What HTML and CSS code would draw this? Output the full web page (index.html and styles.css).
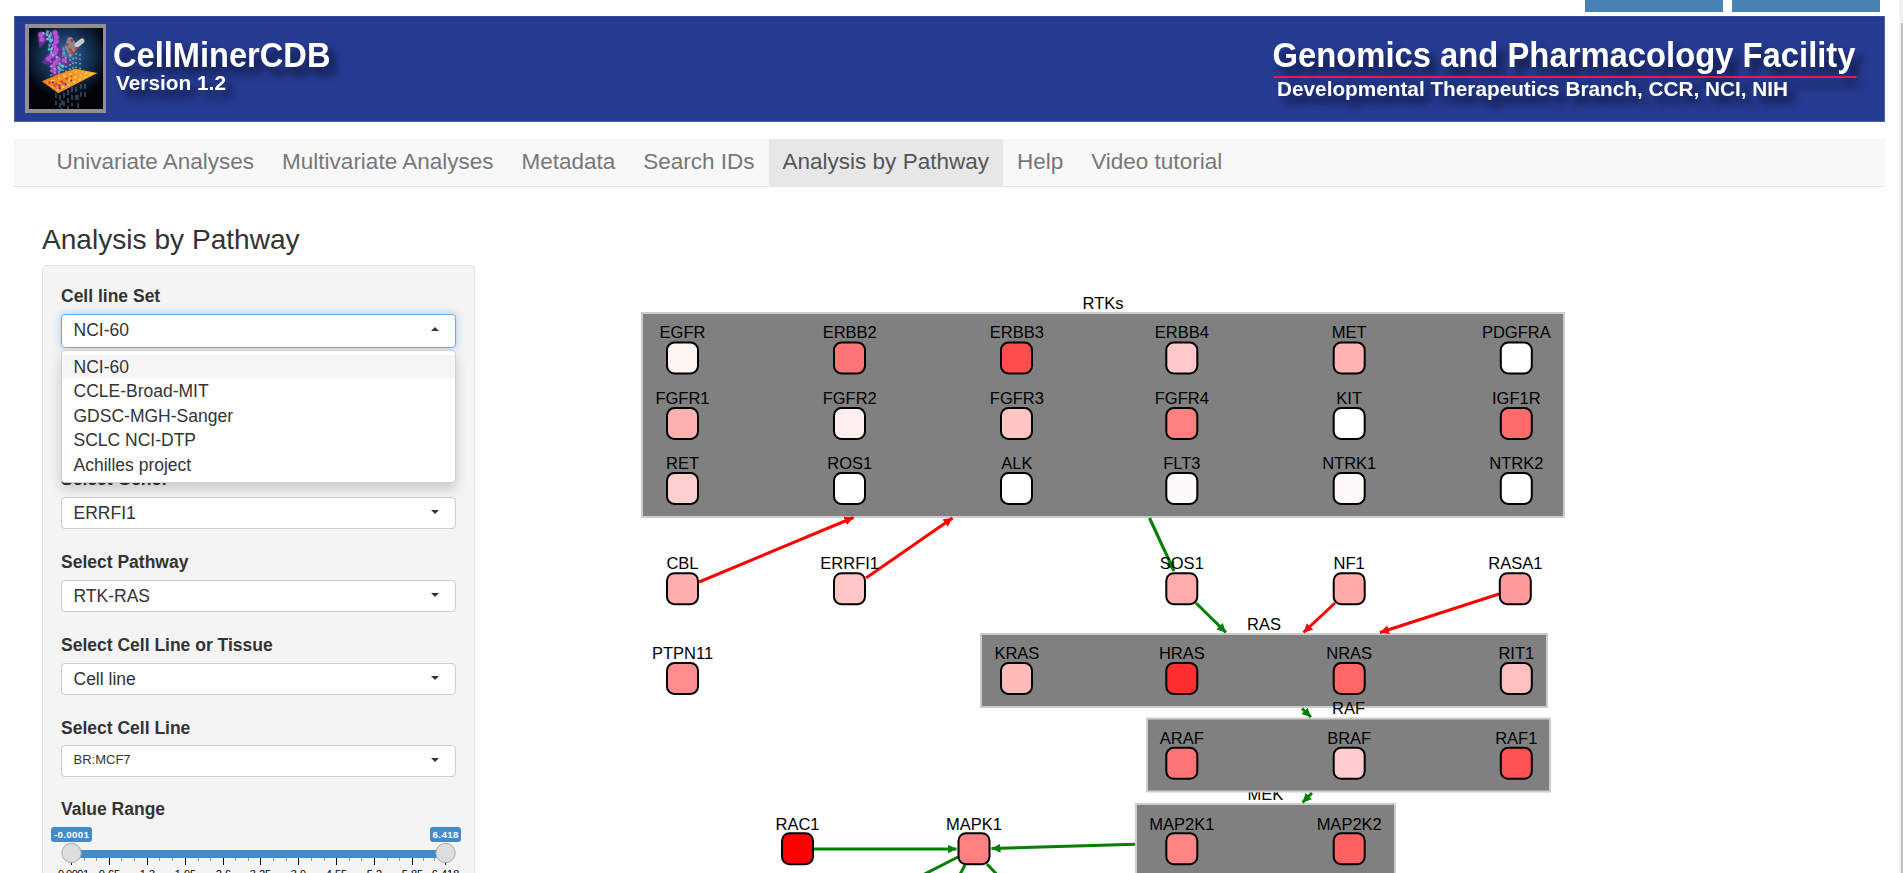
FILE: index.html
```
<!DOCTYPE html>
<html lang="en">
<head>
<meta charset="utf-8">
<title>CellMinerCDB</title>
<link rel="stylesheet" href="styles.css">
</head>
<body>
<div class="page">
  <div class="top-links"><span class="top-link feedback"></span><span class="top-link contact"></span></div>

  <header class="banner">
    <svg class="banner-art" viewBox="14 16 1871 106" width="1871" height="106">
      <defs>
        <radialGradient id="glow" cx="50%" cy="38%" r="60%">
          <stop offset="0" stop-color="#3a78a8"/><stop offset=".45" stop-color="#173a63"/><stop offset="1" stop-color="#02040a"/>
        </radialGradient>
        <linearGradient id="plate" x1="0" x2="1"><stop offset="0" stop-color="#f07a1c"/><stop offset="1" stop-color="#f6b02c"/></linearGradient>
      </defs>
      <rect x="25" y="24" width="81" height="89" fill="#918f92"/>
      <svg x="29" y="28" width="74" height="81" viewBox="0 0 74 81">
        <rect width="74" height="81" fill="#02040a"/>
        <rect width="74" height="72" fill="url(#glow)"/>
        <g fill="none" stroke-linecap="round">
          <path d="M16 6L25 10L23 24M31 20L33 34L25 46" stroke="#5d9fc4" stroke-width="9" stroke-dasharray="3 1" stroke-linecap="butt"/>
          <path d="M12 7L13 13L17 9M26 5L28 12L25 18L28 23L20 30L18 33L24 35M30 22L29 31L24 38L26 45M35 32L38 34" stroke="#65308f" stroke-width="7"/>
          <path d="M12 7L13 13M26 5L28 12L25 18L28 23L20 30L18 33M29 31L24 38L26 45M35 32L38 34" stroke="#b552d2" stroke-width="5" stroke-dasharray="0 4.500"/>
          <path d="M14 5L21 8L18 11L25 13M23 20L22 26L28 29" stroke="#75bddb" stroke-width="2" stroke-dasharray="1 3"/>
          <path d="M41 12L39 19L42 24L46 18L42 14" stroke="#8b8591" stroke-width="6"/>
          <path d="M48 17L53 13" stroke="#c9cccc" stroke-width="5"/>
          <path d="M38 16L42 23M43 25L48 20M43 12L42 16" stroke="#b9392e" stroke-width="2.500" stroke-dasharray="1 5"/>
        </g>
        <g fill="none" stroke="#c5ddec" stroke-dasharray="1.500 3">
          <path d="M22 33V53M26 40V53M30 34V51M34 37V51M37 29V48M41 27V47M44 30V46M47 25V45M51 26V44"/>
        </g>
        <path d="M12.700 53.300L30 46L46 40.700L68.300 45L29.300 65.300Z" fill="url(#plate)"/>
        <path d="M18 55L52 42M23 59L60 44M28 62L65 45M22 52L35 61M34 47L47 55" fill="none" stroke="#ffd568" stroke-width="1.500" stroke-dasharray="2 4"/>
        <path d="M19 54L30 60L36 54M26 57L43 48" fill="none" stroke="#e24b23" stroke-width="2.500" stroke-dasharray="3 3"/>
        <path d="M23 54L34 59M30 61L43 52" fill="none" stroke="#4a3bb5" stroke-width="2" stroke-dasharray="2 5"/>
        <g fill="none" stroke="#58748c" stroke-dasharray="5 3"><path d="M27 65V77M31 67V81M35 65V79M39 62V81M43 59V78M47 59V75M52 56V70M56 56V71M33 72V81M49 67V81"/></g>
      </svg>
      <g class="banner-text">
        <text x="113" y="67.300" font-size="35" textLength="217.500" lengthAdjust="spacingAndGlyphs">CellMinerCDB</text>
        <text x="116" y="90.300" font-size="20" textLength="110" lengthAdjust="spacingAndGlyphs">Version 1.2</text>
        <text x="1272.500" y="67.300" font-size="35.500" textLength="583" lengthAdjust="spacingAndGlyphs">Genomics and Pharmacology Facility</text>
        <rect x="1273" y="76" width="583.500" height="2" fill="#ee1650"/>
        <text x="1277" y="96" font-size="21" textLength="511" lengthAdjust="spacingAndGlyphs">Developmental Therapeutics Branch, CCR, NCI, NIH</text>
      </g>
    </svg>
  </header>

  <nav class="navbar">
    <a class="tab">Univariate Analyses</a>
    <a class="tab">Multivariate Analyses</a>
    <a class="tab">Metadata</a>
    <a class="tab">Search IDs</a>
    <a class="tab active">Analysis by Pathway</a>
    <a class="tab">Help</a>
    <a class="tab">Video tutorial</a>
  </nav>

  <main class="content">
    <section class="side">
      <h3 class="title">Analysis by Pathway</h3>
      <form class="well">
        <div class="group first">
          <label class="label">Cell line Set</label>
          <div class="select open">NCI-60<i class="caret up"></i>
            <div class="menu">
              <div class="option selected">NCI-60</div>
              <div class="option">CCLE-Broad-MIT</div>
              <div class="option">GDSC-MGH-Sanger</div>
              <div class="option">SCLC NCI-DTP</div>
              <div class="option">Achilles project</div>
            </div>
          </div>
        </div>
        <div class="group"><label class="label gene">Select Gene:</label><div class="select">ERRFI1<i class="caret"></i></div></div>
        <div class="group"><label class="label">Select Pathway</label><div class="select">RTK-RAS<i class="caret"></i></div></div>
        <div class="group"><label class="label">Select Cell Line or Tissue</label><div class="select">Cell line<i class="caret"></i></div></div>
        <div class="group"><label class="label">Select Cell Line</label><div class="select small">BR:MCF7<i class="caret"></i></div></div>
        <div class="group range">
          <label class="label">Value Range</label>
          <svg class="slider" viewBox="42 825 433 60" width="433" height="60">
            <rect x="51" y="827" width="41" height="15" rx="3" fill="#428bca"/>
            <rect x="430" y="827" width="31" height="15" rx="3" fill="#428bca"/>
            <g class="badge-text"><text x="71.500" y="838.300" textLength="35">-0.0001</text><text x="445.500" y="838.300" textLength="26">6.418</text></g>
            <rect x="71" y="850" width="375" height="8" fill="#428bca"/>
            <path class="minor" d="M84.500 858v3M96.500 858v3M121.500 858v3M134.500 858v3M159.500 858v3M172.500 858v3M198.500 858v3M210.500 858v3M235.500 858v3M248.500 858v3M273.500 858v3M286.500 858v3M311.500 858v3M324.500 858v3M349.500 858v3M361.500 858v3M387.500 858v3M399.500 858v3M423.500 858v3M434.500 858v3"/>
            <path class="major" d="M71.500 858v7M109.500 858v7M147.500 858v7M185.500 858v7M223.500 858v7M260.500 858v7M298.500 858v7M336.500 858v7M374.500 858v7M412.500 858v7M445.500 858v7"/>
            <g class="ticks"><text x="73.500" y="878" textLength="31">0.0001</text><text x="109.500" y="878">0.65</text><text x="147.500" y="878">1.3</text><text x="185.500" y="878">1.95</text><text x="223.500" y="878">2.6</text><text x="260.500" y="878">3.25</text><text x="298.500" y="878">3.9</text><text x="336.500" y="878">4.55</text><text x="374.500" y="878">5.2</text><text x="412.500" y="878">5.85</text><text x="445.500" y="878">6.418</text></g>
            <circle class="handle" cx="71.500" cy="853" r="9.700"/><circle class="handle" cx="445.500" cy="853" r="9.700"/>
          </svg>
        </div>
      </form>
    </section>

    <svg class="graph" viewBox="475 187 1410 686" width="1410" height="686">
      <defs>
        <marker id="red" markerUnits="userSpaceOnUse" markerWidth="10" markerHeight="10" refX="9" refY="4.500" orient="auto"><path d="M0 0L9 4.500L0 9Z" fill="#f00"/></marker>
        <marker id="green" markerUnits="userSpaceOnUse" markerWidth="10" markerHeight="10" refX="9" refY="4.500" orient="auto"><path d="M0 0L9 4.500L0 9Z" fill="#008000"/></marker>
      </defs>
      <g class="cluster">
        <rect x="642" y="313" width="922" height="204"/>
        <text x="1103" y="309.300">RTKs</text>
        <rect x="981" y="634" width="566" height="73"/>
        <text x="1264" y="629.800">RAS</text>
        <text x="1265.500" y="800.300">MEK</text>
        <rect x="1147" y="718.500" width="403" height="73"/>
        <text x="1348.500" y="714.300">RAF</text>
        <rect x="1136" y="804" width="259" height="80"/>
      </g>
      <g class="edge inhibit">
        <path d="M699 582L853.500 517.500"/><path d="M866 578L952.500 518"/>
        <path d="M1335 603L1303.500 632.500"/><path d="M1499 594L1380 632.500"/>
      </g>
      <g class="edge activate">
        <path d="M1149.500 518L1174 571"/><path d="M1196 603L1226 632.500"/>
        <path d="M1302 708.500L1311 717"/><path d="M1312 793L1302.500 802.500"/>
        <path d="M814 849H956.500"/><path d="M1135 844.300L991.500 848.500"/>
      </g>
      <path class="tail" d="M958 857L915 879M965 865L957 880M987 864L1003 881"/>
      <g class="nodes">
        <g fill="#fff5f3"><rect x="667" y="342.500" width="31" height="31" rx="7.500"/><text x="682.500" y="338.400">EGFR</text></g>
        <g fill="#ff7474"><rect x="834" y="342.500" width="31" height="31" rx="7.500"/><text x="849.700" y="338.400">ERBB2</text></g>
        <g fill="#ff4d4d"><rect x="1001" y="342.500" width="31" height="31" rx="7.500"/><text x="1016.900" y="338.400">ERBB3</text></g>
        <g fill="#ffc9c9"><rect x="1166.300" y="342.500" width="31" height="31" rx="7.500"/><text x="1181.800" y="338.400">ERBB4</text></g>
        <g fill="#ffb3b4"><rect x="1333.700" y="342.500" width="31" height="31" rx="7.500"/><text x="1349.200" y="338.400">MET</text></g>
        <g fill="#fff"><rect x="1500.800" y="342.500" width="31" height="31" rx="7.500"/><text x="1516.300" y="338.400">PDGFRA</text></g>

        <g fill="#ffb0b0"><rect x="667" y="408" width="31" height="31" rx="7.500"/><text x="682.500" y="404.200">FGFR1</text></g>
        <g fill="#ffefee"><rect x="834" y="408" width="31" height="31" rx="7.500"/><text x="849.700" y="404.200">FGFR2</text></g>
        <g fill="#ffc5c5"><rect x="1001" y="408" width="31" height="31" rx="7.500"/><text x="1016.900" y="404.200">FGFR3</text></g>
        <g fill="#ff8080"><rect x="1166.300" y="408" width="31" height="31" rx="7.500"/><text x="1181.800" y="404.200">FGFR4</text></g>
        <g fill="#fff"><rect x="1333.700" y="408" width="31" height="31" rx="7.500"/><text x="1349.200" y="404.200">KIT</text></g>
        <g fill="#ff6c6c"><rect x="1500.800" y="408" width="31" height="31" rx="7.500"/><text x="1516.300" y="404.200">IGF1R</text></g>

        <g fill="#ffcece"><rect x="667" y="473" width="31" height="31" rx="7.500"/><text x="682.500" y="469.400">RET</text></g>
        <g fill="#fff"><rect x="834" y="473" width="31" height="31" rx="7.500"/><text x="849.700" y="469.400">ROS1</text></g>
        <g fill="#fff"><rect x="1001" y="473" width="31" height="31" rx="7.500"/><text x="1016.900" y="469.400">ALK</text></g>
        <g fill="#fffafa"><rect x="1166.300" y="473" width="31" height="31" rx="7.500"/><text x="1181.800" y="469.400">FLT3</text></g>
        <g fill="#fff9f8"><rect x="1333.700" y="473" width="31" height="31" rx="7.500"/><text x="1349.200" y="469.400">NTRK1</text></g>
        <g fill="#fff"><rect x="1500.800" y="473" width="31" height="31" rx="7.500"/><text x="1516.300" y="469.400">NTRK2</text></g>

        <g fill="#ffaeae"><rect x="667" y="573.200" width="31" height="31" rx="7.500"/><text x="682.500" y="569.400">CBL</text></g>
        <g fill="#ffc6c6"><rect x="834" y="573.200" width="31" height="31" rx="7.500"/><text x="849.700" y="569.400">ERRFI1</text></g>
        <g fill="#ffacac"><rect x="1166.300" y="573.200" width="31" height="31" rx="7.500"/><text x="1181.800" y="569.400">SOS1</text></g>
        <g fill="#ffa9a9"><rect x="1333.700" y="573.200" width="31" height="31" rx="7.500"/><text x="1349.200" y="569.400">NF1</text></g>
        <g fill="#ff9b9b"><rect x="1499.800" y="573.200" width="31" height="31" rx="7.500"/><text x="1515.300" y="569.400">RASA1</text></g>

        <g fill="#ff8d8d"><rect x="667" y="663" width="31" height="31" rx="7.500"/><text x="682.500" y="659.400">PTPN11</text></g>
        <g fill="#ffbaba"><rect x="1001" y="663" width="31" height="31" rx="7.500"/><text x="1016.900" y="659.400">KRAS</text></g>
        <g fill="#ff2f2f"><rect x="1166.300" y="663" width="31" height="31" rx="7.500"/><text x="1181.800" y="659.400">HRAS</text></g>
        <g fill="#ff6767"><rect x="1333.700" y="663" width="31" height="31" rx="7.500"/><text x="1349.200" y="659.400">NRAS</text></g>
        <g fill="#ffbfbf"><rect x="1500.800" y="663" width="31" height="31" rx="7.500"/><text x="1516.300" y="659.400">RIT1</text></g>

        <g fill="#ff7575"><rect x="1166.300" y="747.800" width="31" height="31" rx="7.500"/><text x="1181.800" y="744.200">ARAF</text></g>
        <g fill="#ffcdcd"><rect x="1333.700" y="747.800" width="31" height="31" rx="7.500"/><text x="1349.200" y="744.200">BRAF</text></g>
        <g fill="#ff5353"><rect x="1500.800" y="747.800" width="31" height="31" rx="7.500"/><text x="1516.300" y="744.200">RAF1</text></g>

        <g fill="#f00"><rect x="782" y="833.200" width="31" height="31" rx="7.500"/><text x="797.500" y="829.800">RAC1</text></g>
        <g fill="#ff8080"><rect x="958.500" y="833.200" width="31" height="31" rx="7.500"/><text x="974" y="829.800">MAPK1</text></g>
        <g fill="#ff8484"><rect x="1166.300" y="833.200" width="31" height="31" rx="7.500"/><text x="1181.800" y="829.800">MAP2K1</text></g>
        <g fill="#ff6161"><rect x="1333.700" y="833.200" width="31" height="31" rx="7.500"/><text x="1349.200" y="829.800">MAP2K2</text></g>
      </g>
    </svg>
  </main>
</div>
<div class="scrollbar"><div class="thumb"></div></div>
</body>
</html>
```
FILE: styles.css
```
* { box-sizing: border-box; }
body {
  margin: 0;
  width: 1903px;
  height: 873px;
  overflow: hidden;
  display: flex;
  background: #fff;
  color: #333;
  font: 17.5px/25px "Liberation Sans", Arial, sans-serif;
}
.page { width: 1899px; height: 873px; padding: 0 14px; overflow: hidden; }
.top-links { display: flex; justify-content: flex-end; gap: 9px; height: 16px; padding-right: 5px; }
.top-link { height: 12px; background: steelblue; }
.feedback { width: 138px; }
.contact { width: 148px; }

.banner { width: 1871px; height: 106px; background: #263b92; border: 1px solid #5060ab; border-top-color: #3346a0; }
.banner-art { display: block; margin: -1px; }
.banner-text { fill: #fff; font-family: "Liberation Sans", Arial, sans-serif; font-weight: bold; filter: drop-shadow(7px 8px 4px rgba(8, 12, 40, .8)); }

.navbar { display: flex; width: 1871px; height: 48px; margin-top: 17px; padding-left: 28.500px; background: #f8f8f8; border-bottom: 1px solid #e3e3e3; }
.tab { padding: 9.500px 14px; color: #777; font-size: 22.500px; line-height: 25px; white-space: nowrap; }
.tab.active { background: #e7e7e7; color: #555; }

.content { display: flex; width: 1871px; }
.side { width: 461px; flex: none; padding-left: 28px; }
.title { margin: 38px 0 0; height: 40px; font-size: 28.100px; line-height: 30px; font-weight: normal; white-space: nowrap; }
.well { width: 433px; height: 700px; padding: 17.400px 18px 0; background: #f4f4f4; border: 1px solid #e3e3e3; border-radius: 4px; }
.group { margin-bottom: 20px; }
.first { margin-bottom: 118.800px; }
.label { display: block; height: 25px; margin-bottom: 5.600px; line-height: 27px; font-weight: bold; }
.gene { line-height: 25px; }
.select { position: relative; height: 32px; padding: 3px 12px; background: #fff; border: 1px solid #ccc; border-radius: 4px; text-indent: -.500px; line-height: 24px; }
.small { padding-top: 2px; font-size: 13px; }
.open { height: 34px; border-color: #66afe9; box-shadow: 0 0 8px rgba(102, 175, 233, .6); }
.caret { position: absolute; right: 16px; top: 12px; border: 4px solid transparent; border-top-color: #333; border-bottom: 0; }
.caret.up { border-top: 0; border-bottom: 4px solid #333; }
.menu { position: absolute; z-index: 2; left: -1px; right: -1px; top: 35px; height: 133px; padding-top: 4px; background: #fff; border: 1px solid #d0d0d0; border-radius: 4px; box-shadow: 0 6px 12px rgba(0, 0, 0, .18); }
.option { height: 24.500px; padding: 0 12px; line-height: 25px; }
.option.selected { background: #f5f5f5; }

.range { margin-top: -1px; }
.slider { display: block; margin: -1.500px 0 0 -19px; font-family: "Liberation Sans", Arial, sans-serif; }
.badge-text { fill: #fff; font-size: 9.800px; font-weight: bold; text-anchor: middle; }
.minor { stroke: #999; }
.major { stroke: #000; }
.ticks { fill: #000; font-size: 11px; text-anchor: middle; }
.handle { fill: #ddd; stroke: #aaa; }

.graph { flex: none; display: block; font-family: "Liberation Sans", Arial, sans-serif; font-size: 16.500px; }
.graph text { fill: #000; stroke: none; text-anchor: middle; }
.cluster rect { fill: #808080; stroke: #ccc; stroke-width: 2; }
.nodes rect { stroke: #000; stroke-width: 2; }
.edge, .tail { fill: none; stroke-width: 3; }
.inhibit { stroke: #f00; }
.inhibit path { marker-end: url(#red); }
.activate, .tail { stroke: #008000; }
.activate path { marker-end: url(#green); }
marker path { stroke: none; }

.scrollbar { width: 4px; height: 873px; padding: 23px 0 0 2px; background: #f1f1f1; }
.thumb { width: 2px; height: 850px; background: #c1c1c1; }
```
